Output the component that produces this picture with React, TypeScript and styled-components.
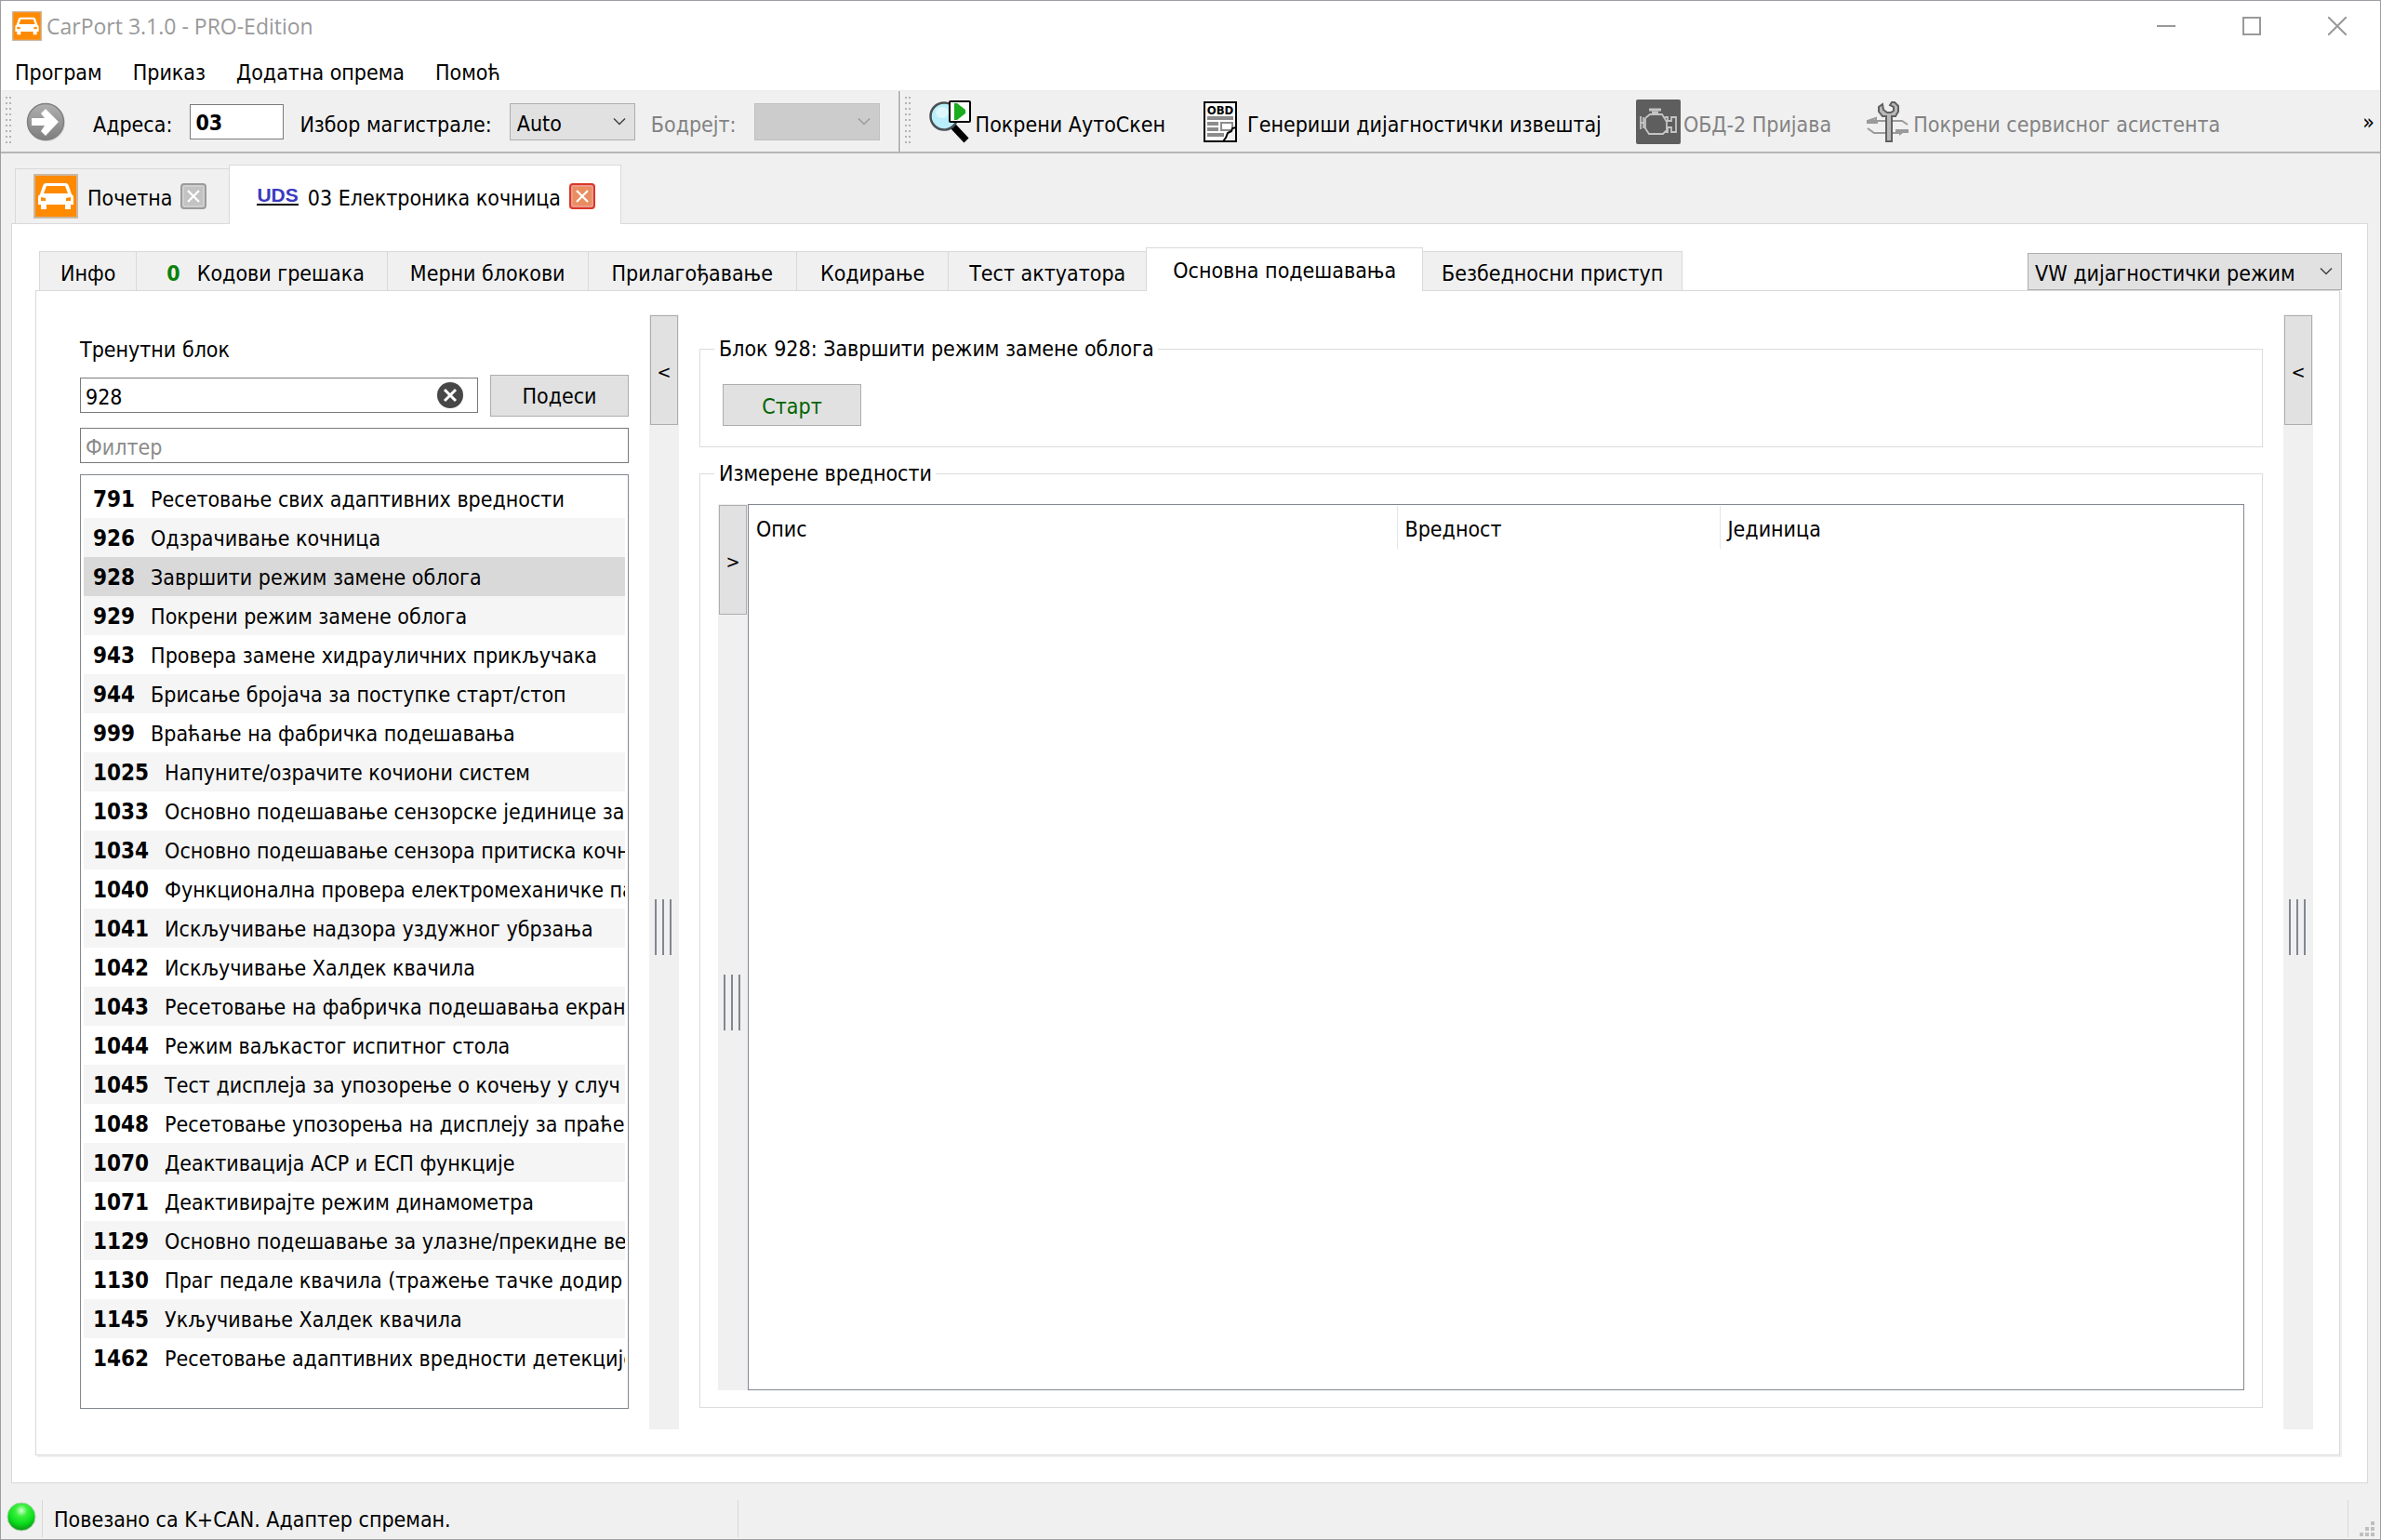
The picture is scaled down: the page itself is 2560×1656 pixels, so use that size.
import React, { useState } from 'react';
import styled, { createGlobalStyle, css } from 'styled-components';

const GlobalStyle = createGlobalStyle`
  *, *::before, *::after { box-sizing: border-box; }
  body { margin: 0; background: #f0f0f0; }
  body, button, input, select {
    font-family: "DejaVu Sans Condensed", "DejaVu Sans", sans-serif;
    font-size: 23px;
    line-height: 28px;
    color: #000;
  }
  button, input, select { margin: 0; border-radius: 0; }
`;

const Window = styled.div`
  display: flex;
  flex-direction: column;
  min-height: 100vh;
  border: 1px solid #9d9da3;
  background: #f0f0f0;
`;

/* Title bar */
const TitleBar = styled.header`
  display: flex;
  align-items: center;
  height: 56px;
  padding: 0 16px 2px 12px;
  background: #fff;
`;
const Title = styled.h1`
  flex: 1;
  margin: 0 0 0 5px;
  font: 400 23px/28px "Open Sans", "Noto Sans", sans-serif;
  color: #999;
`;
const WindowButtons = styled.div`
  display: flex;
  gap: 32px;
`;
const PlainButton = styled.button`
  display: flex;
  align-items: center;
  justify-content: center;
  padding: 0;
  border: 0;
  background: none;
`;
const WindowButton = styled(PlainButton)`
  width: 60px;
  height: 40px;
`;

/* Menu */
const MenuBar = styled.nav`
  display: flex;
  gap: 33px;
  height: 41px;
  padding: 7px 15px 0;
  background: #fff;
  border-bottom: 1px solid #ececec;
`;
const MenuItem = styled(PlainButton)`
  height: 28px;
`;

/* Toolbar */
const ToolBar = styled.div`
  display: flex;
  align-items: stretch;
  height: 67px;
  border-bottom: 2px solid #b6b6b6;
`;
const ToolGroup = styled.div<{ $divider?: boolean }>`
  display: flex;
  align-items: center;
  padding: 0 20px 0 5px;
  ${(p) => p.$divider && css`
    border-right: 2px solid #b6b6b6;
    box-shadow: 1px 0 #fff;
  `}
`;
const Handle = styled.span`
  width: 7px;
  height: 53px;
  background-image: radial-gradient(circle at 1px 1px, #b4b4b4 1px, transparent 1px);
  background-size: 4px 6px;
`;
const GoButton = styled(PlainButton)`
  width: 42px;
  height: 44px;
  margin: 0 30px 0 15px;
`;
const FieldLabel = styled.label<{ $muted?: boolean }>`
  margin-right: 19px;
  padding-top: 6px;
  white-space: nowrap;
  color: ${(p) => (p.$muted ? '#838383' : '#000')};
`;
const AddressInput = styled.input`
  width: 101px;
  height: 38px;
  padding: 2px 5px 0;
  margin-right: 17px;
  border: 1px solid #7a7a7a;
  background: #fff;
  font-weight: 700;
`;
const SelectBox = styled.span<{ $width: number; $after?: number }>`
  display: grid;
  align-items: center;
  width: ${(p) => p.$width}px;
  height: 40px;
  margin-right: ${(p) => p.$after ?? 0}px;
  & > * { grid-area: 1 / 1; }
  & > svg { justify-self: end; margin-right: 10px; pointer-events: none; }
`;
const Select = styled.select`
  appearance: none;
  width: 100%;
  height: 40px;
  padding: 4px 28px 0 7px;
  border: 1px solid #adadad;
  background: #e1e1e1;
  opacity: 1;
  &:disabled { background: #ccc; border-color: #bfbfbf; }
`;
const ToolButtons = styled.div`
  display: flex;
  align-items: center;
  gap: 37px;
  margin-left: 18px;
`;
const ToolButton = styled(PlainButton)`
  gap: 3px;
  white-space: nowrap;
  color: #000;
  &:disabled { color: #838383; }
  & > span { padding-top: 6px; }
`;
const MoreButton = styled(PlainButton)`
  margin-left: auto;
  padding-right: 6px;
`;

/* Document tabs */
const Body = styled.main`
  flex: 1;
  display: flex;
  flex-direction: column;
  padding: 12px 13px 0 11px;
`;
const DocTabs = styled.div`
  display: flex;
  align-items: flex-end;
  padding-left: 4px;
  margin-bottom: -1px;
  z-index: 1;
`;
const DocTab = styled.div<{ $active?: boolean }>`
  display: flex;
  align-items: center;
  border: 1px solid #d9d9d9;
  border-bottom-width: 0;
  ${(p) => p.$active
    ? css`height: 64px; padding: 2px 27px 0 29px; gap: 9px; background: #fff;`
    : css`height: 60px; padding: 0 24px 0 19px; gap: 9px; border-right: 0;
          border-bottom-width: 1px; background: #f0f0f0;`}
`;
const DocTitle = styled(PlainButton)`
  gap: 10px;
  white-space: nowrap;
  & > span { padding-top: 4px; }
`;
const Protocol = styled.b`
  font: 700 21px/18px "Liberation Sans", Arial, sans-serif;
  color: #3a3ac0;
  border-bottom: 2px solid #000;
`;
const CloseButton = styled(PlainButton)<{ $active?: boolean }>`
  width: 28px;
  height: 28px;
  border: 2px solid ${(p) => (p.$active ? '#d9382a' : '#9b9b9b')};
  border-radius: 4px;
  background: ${(p) => (p.$active ? '#e98e60' : '#c3c3c3')};
  box-shadow: inset 0 0 0 2px ${(p) => (p.$active ? '#ee9a8c' : '#cfcfcf')};
`;
const DocPane = styled.section`
  flex: 1;
  display: flex;
  flex-direction: column;
  padding: 25px 29px 29px 25px;
  background: #fff;
  border: 1px solid #d9d9d9;
`;

/* Function tabs */
const FunctionBar = styled.div`
  display: flex;
  justify-content: space-between;
  align-items: flex-end;
  height: 47px;
  margin-bottom: -1px;
  z-index: 1;
`;
const FunctionTabs = styled.div`
  display: flex;
  align-items: flex-end;
  padding-left: 4px;
`;
const FunctionTab = styled.button<{ $active?: boolean; $pad: number }>`
  height: 43px;
  padding: 4px ${(p) => p.$pad}px 0;
  border: 1px solid #d9d9d9;
  border-right-width: 0;
  background: #f0f0f0;
  white-space: nowrap;
  &:last-child { border-right-width: 1px; }
  ${(p) => p.$active && css`
    height: 47px;
    padding-bottom: 3px;
    border-right-width: 1px;
    border-bottom-width: 0;
    background: #fff;
    & + button { border-left-width: 0; }
  `}
`;
const ErrorCount = styled.b`
  margin: 0 18px 0 8px;
  color: #0a820a;
`;
const ModeSlot = styled.div`
  margin: 0 -2px 1px 0;
`;
const FunctionPane = styled.div`
  flex: 1;
  display: flex;
  padding: 25px 28px 27px 47px;
  border: 1px solid #d9d9d9;
  box-shadow: 2px 2px #f0f0f0;
  background: #fff;
`;

/* Block column */
const BlockPanel = styled.aside`
  display: flex;
  flex-direction: column;
  flex: 0 0 590px;
  min-width: 0;
  padding: 24px 0 22px;
`;
const BlockLabel = styled.label`
  margin-bottom: 13px;
`;
const BlockRow = styled.div`
  display: flex;
  align-items: center;
  gap: 13px;
  height: 44px;
  margin-bottom: 13px;
`;
const TextField = styled.div`
  display: flex;
  align-items: center;
  flex: 1;
  height: 38px;
  padding: 0 15px 0 5px;
  border: 1px solid #7a7a7a;
  background: #fff;
`;
const BareInput = styled.input`
  flex: 1;
  min-width: 0;
  padding: 3px 0 0;
  border: 0;
  outline: 0;
  background: none;
  &::placeholder { color: #8b8b8b; opacity: 1; }
`;
const FilterField = styled(TextField)`
  flex: none;
  margin-bottom: 12px;
`;
const PushButton = styled.button<{ $go?: boolean }>`
  width: 149px;
  height: 45px;
  padding: 2px 0 0;
  border: 1px solid #adadad;
  background: #e1e1e1;
  color: ${(p) => (p.$go ? '#006400' : '#000')};
`;
const BlockList = styled.ul`
  flex: 1;
  margin: 0;
  padding: 4px 3px 3px;
  list-style: none;
  border: 1px solid #828790;
  background: #fff;
`;
const BlockItem = styled.button<{ $selected: boolean; $odd: boolean }>`
  display: flex;
  align-items: center;
  gap: 17px;
  width: 100%;
  height: 42px;
  padding: 2px 0 0 10px;
  border: 0;
  overflow: hidden;
  white-space: nowrap;
  background: ${(p) => (p.$selected ? '#d9d9d9' : p.$odd ? '#f5f5f5' : '#fff')};
  & > b { font-size: 24px; }
`;

/* Splitters */
const Splitter = styled.div<{ $left?: number; $right?: number }>`
  display: flex;
  flex-direction: column;
  flex: 0 0 32px;
  margin: 0 ${(p) => p.$right ?? 0}px 0 ${(p) => p.$left ?? 0}px;
  padding: 1px;
  background: #f0f0f0;
`;
const CollapseButton = styled.button`
  height: 118px;
  padding: 4px 0 0;
  border: 1px solid #adadad;
  background: #e1e1e1;
  font-size: 20px;
`;
const Grip = styled.div`
  width: 18px;
  height: 60px;
  margin: auto auto auto 5px;
  background: repeating-linear-gradient(90deg, #828790 0 2px, transparent 2px 8px);
`;

/* Values */
const Work = styled.div`
  display: flex;
  flex-direction: column;
  flex: 1;
  gap: 14px;
  min-width: 0;
  padding: 23px 0;
`;
const Group = styled.fieldset<{ $fill?: boolean }>`
  display: flex;
  min-width: 0;
  margin: 0;
  border: 1px solid #dcdcdc;
  ${(p) => p.$fill
    ? css`flex: 1; padding: 19px 19px 18px;`
    : css`height: 120px; padding: 24px 24px 0;`}
`;
const Legend = styled.legend<{ $pull?: boolean }>`
  margin-left: ${(p) => (p.$pull ? -9 : -4)}px;
  padding: 0 4px 0 5px;
`;
const TableBox = styled.div`
  flex: 1;
  border: 1px solid #828790;
  background: #fff;
`;
const Table = styled.table`
  width: 100%;
  table-layout: fixed;
  border-collapse: collapse;
  margin-top: 1px;
`;
const Th = styled.th<{ $width?: number }>`
  width: ${(p) => (p.$width ? `${p.$width}px` : 'auto')};
  height: 46px;
  padding: 3px 8px 0;
  border-right: ${(p) => (p.$width ? '1px solid #e5e5e5' : '0')};
  font-weight: 400;
  text-align: left;
`;

/* Status bar */
const StatusBar = styled.footer`
  display: flex;
  align-items: center;
  height: 60px;
  padding: 18px 6px 3px 5px;
`;
const StatusLine = styled.span<{ $grow?: boolean; $width?: number }>`
  display: flex;
  align-items: center;
  height: 40px;
  padding-left: 12px;
  padding-top: 2px;
  border-left: 1px solid #d7d7d7;
  ${(p) => (p.$grow ? 'flex: 1;' : `width: ${p.$width}px;`)}
`;
const StatusLamp = styled.span`
  display: flex;
  width: 39px;
  padding-bottom: 4px;
`;
const SizeGrip = styled.svg`
  align-self: flex-end;
`;

/* Drawings */
const CarIcon = ({ size }: { size: number }) => (
  <svg width={size} height={size} viewBox="0 0 48 48" aria-hidden="true">
    <rect x="1" y="1" width="46" height="46" fill="#ff8a00" stroke="#cbb8a4" strokeWidth="2" />
    <path fill="#fff" fillRule="evenodd" d="M13 10h22q2 0 3 3l3 9q2 1 2 3v8H5v-8q0-2 2-3l3-9q1-3 3-3zM14 13l-3 8h26l-3-8zM8 25v4h5v-3zM40 25l-5 1v3h5z" />
    <path fill="#fff" d="M8 32h6v6H8zM34 32h6v6h-6z" />
  </svg>
);
const Chevron = ({ color = '#404040' }: { color?: string }) => (
  <svg width="14" height="10" viewBox="0 0 14 10" aria-hidden="true">
    <path d="M1 1.5l6 6 6-6" fill="none" stroke={color} strokeWidth="1.5" />
  </svg>
);
const CrossMark = () => (
  <svg width="16" height="16" viewBox="0 0 16 16" aria-hidden="true">
    <path d="M2 2l12 12M14 2L2 14" stroke="#fff" strokeWidth="2.2" />
  </svg>
);
const ArrowIcon = () => (
  <svg width="42" height="44" viewBox="0 0 42 44" aria-hidden="true">
    <defs>
      <linearGradient id="go" x1="0" y1="0" x2="0" y2="1">
        <stop offset="0" stopColor="#b0b0b0" />
        <stop offset="1" stopColor="#7e7e7e" />
      </linearGradient>
    </defs>
    <circle cx="22" cy="23" r="20" fill="#d8d8d8" />
    <circle cx="21" cy="22" r="19.5" fill="url(#go)" stroke="#808080" strokeWidth="1.5" />
    <path d="M6 18h14l-4-5 5-5 14 14-14 15-5-5 4-6H6z" fill="#fff" />
  </svg>
);
const ScanIcon = () => (
  <svg width="48" height="48" viewBox="0 0 48 48" aria-hidden="true">
    <path d="M27 29l14 15" stroke="#000" strokeWidth="7" />
    <circle cx="17" cy="18" r="14.5" fill="#b9eefa" stroke="#4a4f52" strokeWidth="2.5" />
    <ellipse cx="15" cy="14" rx="7" ry="6" fill="#dcf7fd" />
    <rect x="23" y="2" width="22" height="22" rx="1" fill="#fff" stroke="#000" strokeWidth="2" />
    <path d="M28 4v18h3l9-7v-4l-9-7z" fill="#1aad1f" />
  </svg>
);
const ReportIcon = () => (
  <svg width="48" height="48" viewBox="0 0 48 48" aria-hidden="true">
    <rect x="5" y="3" width="34" height="42" fill="#fff" stroke="#000" strokeWidth="2" />
    <text x="22" y="16" textAnchor="middle" fontFamily="DejaVu Sans Condensed" fontWeight="700" fontSize="13">OBD</text>
    <path d="M8 18h28v4H8zM8 24h12v4H8zM8 30h12v4H8zM8 36h18v4H8z" fill="#8c8c8c" />
    <rect x="23" y="25" width="12" height="8" fill="#fff" stroke="#8c8c8c" strokeWidth="2" />
    <path d="M39 30v15H25l3-4 2-5 4-2 1-3z" fill="#f0f0f0" />
    <path d="M39 30l-4 1-1 3-4 2-2 5-3 4" fill="none" stroke="#000" strokeWidth="2" />
    <path d="M39 30v15H24" fill="none" stroke="#000" strokeWidth="2" />
  </svg>
);
const EngineIcon = () => (
  <svg width="48" height="48" viewBox="0 0 48 48" aria-hidden="true">
    <rect width="48" height="48" rx="2" fill="#5e5e5e" />
    <g fill="none" stroke="#c4c4c4" strokeWidth="1.8">
      <path d="M5 18v14M8 19v12M5 25h4M10 20v11l4 6h15l4-4v-9l-5-8H15l-5 4M31 19h3v4h4v-4h5v16h-5v-5h-4v5h-3" />
      <path d="M14 11h13" strokeWidth="3" />
      <path d="M17 14h7" strokeWidth="3" />
    </g>
  </svg>
);
const ServiceIcon = () => (
  <svg width="48" height="48" viewBox="0 0 48 48" aria-hidden="true">
    <path d="M2 23l9-3v3h28l6 4M2 31l7 5h28" fill="none" stroke="#9a9a9a" strokeWidth="2" />
    <path d="M1 22h12v4H1zM32 32h14v4h-6l-4 3v-3h-4z" fill="#9a9a9a" />
    <path d="M18 5l-4 3v5l4 5h4v27h6V18h4l3-5V7l-4-4h-3l-2 3 4 2v4l-3 2h-4l-4-3z" fill="#b8b8b8" stroke="#606060" strokeWidth="2" />
  </svg>
);
const ClearIcon = () => (
  <svg width="28" height="28" viewBox="0 0 28 28" aria-hidden="true">
    <circle cx="14" cy="14" r="14" fill="#474747" />
    <path d="M8 8l12 12M20 8L8 20" stroke="#fff" strokeWidth="3" />
  </svg>
);
const LampIcon = () => (
  <svg width="34" height="34" viewBox="0 0 34 34" aria-hidden="true">
    <defs>
      <radialGradient id="lamp" cx="0.5" cy="0.28" r="0.7">
        <stop offset="0" stopColor="#d0ffd0" />
        <stop offset="0.3" stopColor="#3df03d" />
        <stop offset="0.65" stopColor="#0be01f" />
        <stop offset="1" stopColor="#0a9a14" />
      </radialGradient>
    </defs>
    <circle cx="17" cy="17" r="15" fill="url(#lamp)" stroke="#a6cfa6" />
  </svg>
);

const MENU = ['Програм', 'Приказ', 'Додатна опрема', 'Помоћ'];
const FUNCTIONS: { title: string; pad: number; count?: string }[] = [
  { title: 'Инфо', pad: 22 },
  { title: 'Кодови грешака', pad: 24, count: '0' },
  { title: 'Мерни блокови', pad: 24 },
  { title: 'Прилагођавање', pad: 25 },
  { title: 'Кодирање', pad: 25 },
  { title: 'Тест актуатора', pad: 22 },
  { title: 'Основна подешавања', pad: 28 },
  { title: 'Безбедносни приступ', pad: 20 },
];
const BLOCKS: [number, string][] = [
  [791, 'Ресетовање свих адаптивних вредности'],
  [926, 'Одзрачивање кочница'],
  [928, 'Завршити режим замене облога'],
  [929, 'Покрени режим замене облога'],
  [943, 'Провера замене хидрауличних прикључака'],
  [944, 'Брисање бројача за поступке старт/стоп'],
  [999, 'Враћање на фабричка подешавања'],
  [1025, 'Напуните/озрачите кочиони систем'],
  [1033, 'Основно подешавање сензорске јединице за'],
  [1034, 'Основно подешавање сензора притиска кочн'],
  [1040, 'Функционална провера електромеханичке па'],
  [1041, 'Искључивање надзора уздужног убрзања'],
  [1042, 'Искључивање Халдек квачила'],
  [1043, 'Ресетовање на фабричка подешавања екран'],
  [1044, 'Режим ваљкастог испитног стола'],
  [1045, 'Тест дисплеја за упозорење о кочењу у случ'],
  [1048, 'Ресетовање упозорења на дисплеју за праће'],
  [1070, 'Деактивација АСР и ЕСП функције'],
  [1071, 'Деактивирајте режим динамометра'],
  [1129, 'Основно подешавање за улазне/прекидне ве'],
  [1130, 'Праг педале квачила (тражење тачке додир'],
  [1145, 'Укључивање Халдек квачила'],
  [1462, 'Ресетовање адаптивних вредности детекције'],
];

export default function App() {
  const [address, setAddress] = useState('03');
  const [block, setBlock] = useState('928');
  const [filter, setFilter] = useState('');
  const [tab, setTab] = useState(6);
  const shown = BLOCKS.filter(([n, t]) => `${n} ${t}`.toLowerCase().includes(filter.toLowerCase()));

  return (
    <>
      <GlobalStyle />
      <Window>
        <TitleBar>
          <CarIcon size={32} />
          <Title>CarPort 3.1.0 - PRO-Edition</Title>
          <WindowButtons>
            <WindowButton aria-label="Minimize">
              <svg width="20" height="20"><path d="M0 10h20" stroke="#999" strokeWidth="2" /></svg>
            </WindowButton>
            <WindowButton aria-label="Maximize">
              <svg width="20" height="20"><rect x="1" y="1" width="18" height="18" fill="none" stroke="#999" strokeWidth="2" /></svg>
            </WindowButton>
            <WindowButton aria-label="Close">
              <svg width="20" height="20"><path d="M0 0l20 20M20 0L0 20" stroke="#999" strokeWidth="2" /></svg>
            </WindowButton>
          </WindowButtons>
        </TitleBar>

        <MenuBar>
          {MENU.map((m) => <MenuItem key={m}>{m}</MenuItem>)}
        </MenuBar>

        <ToolBar>
          <ToolGroup $divider>
            <Handle />
            <GoButton aria-label="Go"><ArrowIcon /></GoButton>
            <FieldLabel htmlFor="address">Адреса:</FieldLabel>
            <AddressInput id="address" value={address} onChange={(e) => setAddress(e.target.value)} />
            <FieldLabel htmlFor="bus">Избор магистрале:</FieldLabel>
            <SelectBox $width={135} $after={17}>
              <Select id="bus"><option>Auto</option></Select>
              <Chevron />
            </SelectBox>
            <FieldLabel htmlFor="baud" $muted>Бодрејт:</FieldLabel>
            <SelectBox $width={135}>
              <Select id="baud" disabled />
              <Chevron color="#9a9a9a" />
            </SelectBox>
          </ToolGroup>
          <ToolGroup>
            <Handle />
            <ToolButtons>
              <ToolButton><ScanIcon /><span>Покрени АутоСкен</span></ToolButton>
              <ToolButton><ReportIcon /><span>Генериши дијагностички извештај</span></ToolButton>
              <ToolButton disabled><EngineIcon /><span>ОБД-2 Пријава</span></ToolButton>
              <ToolButton disabled><ServiceIcon /><span>Покрени сервисног асистента</span></ToolButton>
            </ToolButtons>
          </ToolGroup>
          <MoreButton>»</MoreButton>
        </ToolBar>

        <Body>
          <DocTabs>
            <DocTab>
              <DocTitle><CarIcon size={48} /><span>Почетна</span></DocTitle>
              <CloseButton aria-label="Close"><CrossMark /></CloseButton>
            </DocTab>
            <DocTab $active>
              <DocTitle><Protocol>UDS</Protocol><span>03 Електроника кочница</span></DocTitle>
              <CloseButton $active aria-label="Close"><CrossMark /></CloseButton>
            </DocTab>
          </DocTabs>

          <DocPane>
            <FunctionBar>
              <FunctionTabs role="tablist">
                {FUNCTIONS.map((f, i) => (
                  <FunctionTab key={f.title} role="tab" aria-selected={i === tab} $active={i === tab} $pad={f.pad} onClick={() => setTab(i)}>
                    {f.count && <ErrorCount>{f.count}</ErrorCount>}
                    {f.title}
                  </FunctionTab>
                ))}
              </FunctionTabs>
              <ModeSlot>
                <SelectBox $width={338}>
                  <Select aria-label="Режим"><option>VW дијагностички режим</option></Select>
                  <Chevron />
                </SelectBox>
              </ModeSlot>
            </FunctionBar>

            <FunctionPane>
              <BlockPanel>
                <BlockLabel htmlFor="block">Тренутни блок</BlockLabel>
                <BlockRow>
                  <TextField>
                    <BareInput id="block" value={block} onChange={(e) => setBlock(e.target.value)} />
                    <PlainButton aria-label="Clear" onClick={() => setBlock('')}><ClearIcon /></PlainButton>
                  </TextField>
                  <PushButton>Подеси</PushButton>
                </BlockRow>
                <FilterField>
                  <BareInput aria-label="Филтер" placeholder="Филтер" value={filter} onChange={(e) => setFilter(e.target.value)} />
                </FilterField>
                <BlockList>
                  {shown.map(([n, text], i) => (
                    <li key={n}>
                      <BlockItem $selected={String(n) === block} $odd={i % 2 === 1} onClick={() => setBlock(String(n))}>
                        <b>{n}</b>
                        <span>{text}</span>
                      </BlockItem>
                    </li>
                  ))}
                </BlockList>
              </BlockPanel>

              <Splitter $left={22} $right={22}>
                <CollapseButton>&lt;</CollapseButton>
                <Grip />
              </Splitter>

              <Work>
                <Group>
                  <Legend $pull>Блок 928: Завршити режим замене облога</Legend>
                  <PushButton $go>Старт</PushButton>
                </Group>
                <Group $fill>
                  <Legend>Измерене вредности</Legend>
                  <Splitter>
                    <CollapseButton>&gt;</CollapseButton>
                    <Grip />
                  </Splitter>
                  <TableBox>
                    <Table>
                      <thead>
                        <tr>
                          <Th scope="col" $width={697}>Опис</Th>
                          <Th scope="col" $width={347}>Вредност</Th>
                          <Th scope="col">Јединица</Th>
                        </tr>
                      </thead>
                    </Table>
                  </TableBox>
                </Group>
              </Work>

              <Splitter $left={22}>
                <CollapseButton>&lt;</CollapseButton>
                <Grip />
              </Splitter>
            </FunctionPane>
          </DocPane>
        </Body>

        <StatusBar>
          <StatusLamp><LampIcon /></StatusLamp>
          <StatusLine $width={748}>Повезано са K+CAN. Адаптер спреман.</StatusLine>
          <StatusLine $grow />
          <StatusLine $width={13} />
          <SizeGrip width="16" height="16" viewBox="0 0 16 16" aria-hidden="true">
            <path fill="#bfbfbf" d="M12 0h4v4h-4zM6 6h4v4H6zM12 6h4v4h-4zM0 12h4v4H0zM6 12h4v4H6zM12 12h4v4h-4z" />
          </SizeGrip>
        </StatusBar>
      </Window>
    </>
  );
}
